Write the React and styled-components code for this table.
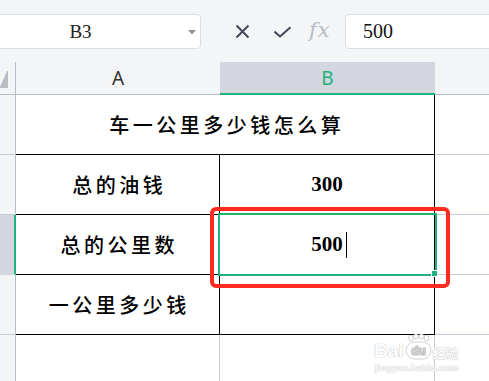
import React from "react";
import styled, { createGlobalStyle } from "styled-components";

const GREEN = "#20b27a";
const GRID = "#c6cbd7";
const HEAD_LINE = "#b6bcc8";
const HEAD_BG = "#f4f5f7";
const HEAD_ACTIVE = "#d3d6de";

const Global = createGlobalStyle`
  html, body { margin: 0; padding: 0; background: #fff; overflow: hidden; }
  body { font-family: "Liberation Sans", "Noto Sans CJK SC", sans-serif; }
  * { box-sizing: border-box; }
`;

const Page = styled.div`
  width: 489px;
  height: 381px;
  overflow: hidden;
  display: flex;
  flex-direction: column;
`;

const Toolbar = styled.div`
  height: 62px;
  flex: none;
  background: ${HEAD_BG};
  display: flex;
  align-items: center;
  padding-top: 1px;
`;

const NameBox = styled.div`
  margin-left: -40px;
  width: 241px;
  height: 35px;
  flex: none;
  background: #fff;
  border: 1px solid #dadde3;
  border-radius: 4px;
  display: grid;
  grid-template-columns: 1fr auto;
  align-items: center;
  padding: 0 4px 0 12px;
  font-family: "Liberation Serif", serif;
  font-size: 19px;
  color: #222;
`;

const NameText = styled.span`
  text-align: center;
`;

const Caret = styled.svg`
  display: block;
  margin-top: 1px;
`;

const ToolIcon = styled.svg`
  flex: none;
  display: block;
  margin-left: ${(p) => p.$ml}px;
`;

const Fx = styled.span`
  flex: none;
  width: 24px;
  margin-left: 17px;
  font-family: "DejaVu Serif", serif;
  font-style: italic;
  font-size: 21px;
  color: #b7bbc3;
  letter-spacing: 1px;
  line-height: 1;
  margin-top: -2px;
`;

const FormulaBox = styled.div`
  flex: 1;
  margin-left: 12px;
  margin-right: -20px;
  height: 35px;
  background: #fff;
  border: 1px solid #dadde3;
  border-radius: 4px;
  display: flex;
  align-items: center;
  padding-left: 17px;
  font-family: "Liberation Serif", serif;
  font-size: 20px;
  color: #111;
`;

const Sheet = styled.div`
  position: relative;
  display: grid;
  grid-template-columns: 16px 204px 215px 1fr;
  grid-template-rows: 33px repeat(5, 60px);
`;

const Corner = styled.div`
  background: ${HEAD_BG};
  border-right: 1px solid ${HEAD_LINE};
  border-bottom: 1px solid ${HEAD_LINE};
  display: flex;
  align-items: flex-end;
  padding-bottom: 6px;
`;

const ColHeader = styled.div`
  background: ${(p) => (p.$active ? HEAD_ACTIVE : HEAD_BG)};
  border-bottom: ${(p) => (p.$active ? `2px solid ${GREEN}` : `1px solid ${HEAD_LINE}`)};
  display: flex;
  align-items: center;
  justify-content: center;
  padding-top: ${(p) => (p.$active ? 1 : 0)}px;
  font-family: "Noto Sans", "Liberation Sans", sans-serif;
  font-size: 19px;
  color: ${(p) => (p.$active ? GREEN : "#333")};
`;

const RowHeader = styled.div`
  background: ${(p) => (p.$active ? HEAD_ACTIVE : HEAD_BG)};
  border-right: ${(p) => (p.$active ? `2px solid ${GREEN}` : `1px solid ${HEAD_LINE}`)};
  border-bottom: 1px solid ${(p) => (p.$active ? HEAD_ACTIVE : GRID)};
`;

const Cell = styled.div`
  position: relative;
  grid-column: span ${(p) => p.$span || 1};
  border-right: ${(p) => (p.$r ? `1px solid ${p.$r}` : "none")};
  border-bottom: 1px solid ${(p) => p.$b || GRID};
  display: flex;
  align-items: center;
  justify-content: center;
  color: #000;
`;

const Label = styled.span`
  font-family: "Noto Sans CJK SC", sans-serif;
  font-weight: 500;
  font-size: 20px;
  letter-spacing: 3.5px;
  padding-left: 3.5px;
  line-height: 1;
`;

const Num = styled.span`
  position: relative;
  font-family: "Liberation Serif", serif;
  font-weight: 700;
  font-size: 21px;
  line-height: 1;
  ${(p) =>
    p.$editing &&
    `
    &::after {
      content: "";
      position: absolute;
      left: calc(100% + 3px);
      top: 50%;
      width: 1px;
      height: 26px;
      background: #000;
      transform: translateY(-50%);
    }
  `}
`;

const Selection = styled.div`
  position: absolute;
  left: -2px;
  top: -2px;
  right: -3px;
  bottom: -2px;
  border: 2px solid ${GREEN};
  pointer-events: none;
  z-index: 2;
  &::after {
    content: "";
    position: absolute;
    right: -3px;
    bottom: -3px;
    width: 5px;
    height: 5px;
    background: ${GREEN};
    border: 1px solid #fff;
  }
`;

const Annotation = styled.div`
  position: absolute;
  left: -10px;
  top: -8px;
  width: 240px;
  height: 81px;
  border: 4px solid #ff2a20;
  border-radius: 6px;
  z-index: 3;
  pointer-events: none;
`;

const Watermark = styled.div`
  position: absolute;
  left: 374px;
  top: 272px;
  display: flex;
  flex-direction: column;
  align-items: flex-start;
  color: #fff;
  text-shadow: 0 0 1px #bdbdbd, 0 0 1px #bdbdbd;
  z-index: 4;
  pointer-events: none;
`;

const WmTop = styled.div`
  display: flex;
  align-items: flex-end;
  gap: 1px;
`;

const WmBai = styled.span`
  font-family: "Liberation Sans", sans-serif;
  font-weight: 700;
  font-size: 19px;
  line-height: 1;
`;

const WmCn = styled.span`
  font-family: "Noto Sans CJK SC", sans-serif;
  font-weight: 700;
  font-size: 13px;
  line-height: 1;
  margin-bottom: 1px;
`;

const WmUrl = styled.span`
  margin-top: 3px;
  margin-left: 1px;
  font-family: "Liberation Sans", sans-serif;
  font-weight: 700;
  font-size: 9.5px;
  line-height: 1;
`;

function Paw() {
  return (
    <svg width="27" height="26" viewBox="0 0 27 26" style={{ display: "block" }}>
      <g fill="#fff" stroke="#c4c4c4" strokeWidth="0.8">
        <ellipse cx="6" cy="4" rx="2.4" ry="2.8" />
        <ellipse cx="11" cy="2.5" rx="2.4" ry="2.5" />
        <ellipse cx="16.5" cy="2.5" rx="2.4" ry="2.5" />
        <ellipse cx="21.5" cy="4" rx="2.4" ry="2.8" />
        <rect x="1" y="8" width="25" height="17" rx="8.5" />
      </g>
      <text
        x="13.5"
        y="21"
        textAnchor="middle"
        fontFamily="Liberation Sans, sans-serif"
        fontWeight="700"
        fontSize="12"
        fill="#fff"
        stroke="#c4c4c4"
        strokeWidth="0.6"
      >
        du
      </text>
    </svg>
  );
}

export default function App() {
  return (
    <Page>
      <Global />
      <Toolbar>
        <NameBox>
          <NameText>B3</NameText>
          <Caret width="8" height="5" viewBox="0 0 8 5">
            <polygon points="0,0 8,0 4,4.5" fill="#8c929b" />
          </Caret>
        </NameBox>
        <ToolIcon $ml={34} width="15" height="15" viewBox="0 0 15 15">
          <path d="M1.5 1.5 L13.5 13.5 M13.5 1.5 L1.5 13.5" stroke="#3d4554" strokeWidth="1.8" fill="none" />
        </ToolIcon>
        <ToolIcon $ml={23} width="19" height="12" viewBox="0 0 19 12">
          <path d="M1.5 5.5 L7 10.5 L17.5 1.2" stroke="#3d4554" strokeWidth="1.9" fill="none" />
        </ToolIcon>
        <Fx>fx</Fx>
        <FormulaBox>500</FormulaBox>
      </Toolbar>

      <Sheet>
        <Corner>
          <svg width="8" height="17" viewBox="0 0 8 17" style={{ display: "block" }}>
            <polygon points="7,0 8,0 8,17 0,17 0,16" fill="#b9bcc2" />
          </svg>
        </Corner>
        <ColHeader>A</ColHeader>
        <ColHeader $active>B</ColHeader>
        <ColHeader />

        <RowHeader />
        <Cell $span={2} $r="#000" $b="#000">
          <Label>车一公里多少钱怎么算</Label>
        </Cell>
        <Cell />

        <RowHeader />
        <Cell $r="#000" $b="#000">
          <Label>总的油钱</Label>
        </Cell>
        <Cell $r="#000" $b="#000">
          <Num>300</Num>
        </Cell>
        <Cell />

        <RowHeader $active />
        <Cell $r="#000" $b="#000">
          <Label>总的公里数</Label>
        </Cell>
        <Cell $r="#000" $b="#000">
          <Num $editing>500</Num>
          <Selection />
          <Annotation />
        </Cell>
        <Cell />

        <RowHeader />
        <Cell $r="#000" $b="#000">
          <Label>一公里多少钱</Label>
        </Cell>
        <Cell $r="#000" $b="#000" />
        <Cell />

        <RowHeader />
        <Cell $r={GRID} />
        <Cell $r={GRID} />
        <Cell />

        <Watermark>
          <WmTop>
            <WmBai>Bai</WmBai>
            <Paw />
            <WmCn>经验</WmCn>
          </WmTop>
          <WmUrl>jingyan.baidu.com</WmUrl>
        </Watermark>
      </Sheet>
    </Page>
  );
}
